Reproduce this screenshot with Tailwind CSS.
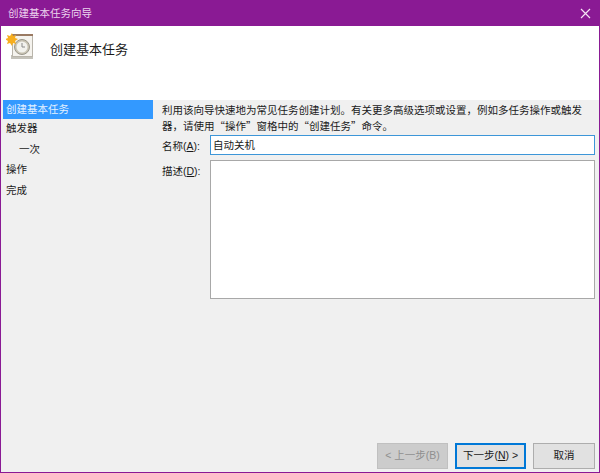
<!DOCTYPE html>
<html lang="zh-CN">
<head>
  <meta charset="UTF-8" />
  <title>创建基本任务向导</title>
  <script src="https://cdn.jsdelivr.net/npm/@tailwindcss/browser@4"></script>
</head>
<body class="bg-white">
  <div class="w-[600px] h-[473px] flex flex-col border border-[#8a1a94] overflow-hidden font-['Liberation_Sans','Noto_Sans_CJK_SC',sans-serif] text-[10.5px] text-[#1a1a1a]">
    <!-- 标题栏 -->
    <div class="h-[25px] shrink-0 bg-[#8a1a94] flex items-center justify-between pl-[7px] pr-[8px] text-[#ecd3ee]">
      <span>创建基本任务向导</span>
      <svg width="11" height="11" viewBox="0 0 11 11" fill="none" stroke="#f3e3f4" stroke-width="1.2"><path d="M1 1l9 9M10 1l-9 9"/></svg>
    </div>

    <!-- 页眉 -->
    <div class="h-[74px] shrink-0 bg-white flex items-start pl-[5px] pt-[7px]">
      <svg width="30" height="30" viewBox="0 0 30 30" class="shrink-0">
        <rect x="5" y="22" width="22" height="4" fill="#c4c2ba"/>
        <rect x="6" y="1" width="21" height="23" fill="#b9b5ab"/>
        <rect x="7" y="3" width="19" height="20" fill="#f5f3ee"/>
        <rect x="6" y="1" width="21" height="2" fill="#9a7a62"/>
        <circle cx="16" cy="14" r="7.5" fill="#c9c4b4" stroke="#9a978c"/>
        <circle cx="16" cy="14" r="5.5" fill="#f2f2ee"/>
        <path d="M16 10v4h3" fill="none" stroke="#8a8a8a" stroke-width="1"/>
        <path d="M6 0l1 3 3-1-1 3 3 1-3 2 1 3-3-1-1 3-2-3-3 1 1-3-3-2 3-1-1-3 3 1z" fill="#f7ae1e"/>
      </svg>
      <span class="ml-[14px] mt-[8px] text-[13px] leading-[18px]">创建基本任务</span>
    </div>

    <!-- 主体 -->
    <div class="flex-1 flex bg-[#f0f0f0] pl-[2px]">
      <nav class="w-[150px] shrink-0 leading-[20.5px]">
        <div class="h-[19px] bg-[#3399ff] text-[#e4f1ff] pl-[3px] leading-[18px]">创建基本任务</div>
        <div class="pl-[3px] -mt-[1px]">触发器</div>
        <div class="pl-[16px]">一次</div>
        <div class="pl-[3px]">操作</div>
        <div class="pl-[3px]">完成</div>
      </nav>

      <div class="flex-1 flex flex-col pl-[9px] pr-[4px] min-w-0">
        <p class="whitespace-nowrap leading-[15px] pt-[3px]">利用该向导快速地为常见任务创建计划。有关更多高级选项或设置，例如多任务操作或触发<br />器，请使用<span class="font-['Noto_Sans_CJK_SC']">“</span>操作<span class="font-['Noto_Sans_CJK_SC']">”</span>窗格中的<span class="font-['Noto_Sans_CJK_SC']">“</span>创建任务<span class="font-['Noto_Sans_CJK_SC']">”</span>命令。</p>

        <div class="flex items-start mt-[1px]">
          <label class="w-[48px] shrink-0 pt-[4px]">名称(<span class="underline">A</span>):</label>
          <div class="flex-1 h-[20px] bg-white border border-[#3d96d8] pl-[2px] leading-[18px]">自动关机</div>
        </div>

        <div class="flex mt-[5px]">
          <label class="w-[48px] shrink-0 pt-[4px]">描述(<span class="underline">D</span>):</label>
          <div class="flex-1 h-[139px] bg-white border border-[#a8a8a8]"></div>
        </div>

        <div class="mt-auto mb-[3px] flex justify-end gap-[7px]">
          <button class="w-[71px] h-[26px] bg-[#cccccc] border border-[#c0c0c0] text-[#8f8f8f]">&lt; 上一步(B)</button>
          <button class="w-[71px] h-[26px] bg-[#e1e1e1] border-2 border-[#0078d7]">下一步(<span class="underline">N</span>) &gt;</button>
          <button class="w-[62px] h-[26px] bg-[#e1e1e1] border border-[#adadad]">取消</button>
        </div>
      </div>
    </div>
  </div>
</body>
</html>
